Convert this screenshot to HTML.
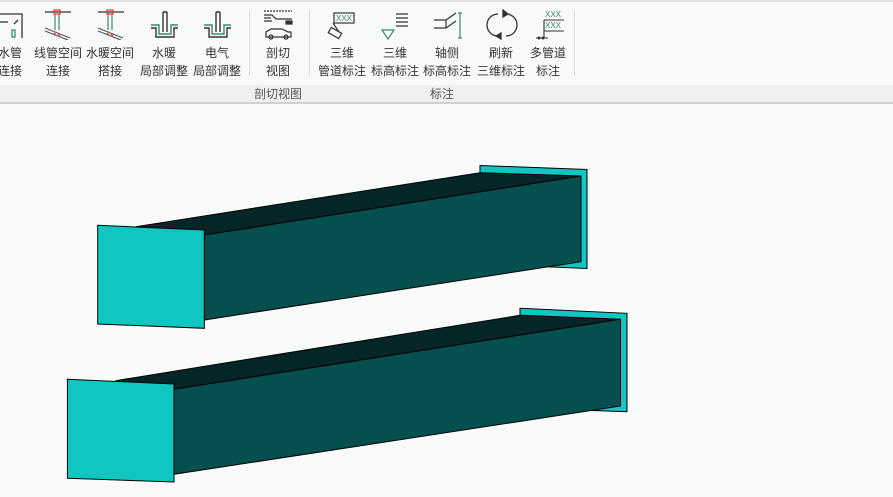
<!DOCTYPE html>
<html><head><meta charset="utf-8"><style>
html,body{margin:0;padding:0;width:893px;height:497px;overflow:hidden;background:#f9fbfb;font-family:"Liberation Sans","Noto Sans CJK SC",sans-serif;}
#tb{position:absolute;left:0;top:0;width:893px;height:85px;background:#f8f9f9;border-top:2px solid #e4e6e6;box-sizing:border-box;}
#gl{position:absolute;left:0;top:85px;width:893px;height:17px;background:#eff1f1;border-bottom:2px solid #cfd1d1;}
.b{position:absolute;top:44px;width:70px;text-align:center;font-size:12px;line-height:18px;color:#333;}
.g{position:absolute;top:86px;font-size:12px;color:#555;line-height:16px;}
.sep{position:absolute;top:10px;width:1px;height:66px;background:#dcdede;}
svg.i{position:absolute;top:8px;}
</style></head><body>
<div id="tb"></div><div id="gl"></div>
<div class="b" style="left:-25px">水管<br>连接</div>
<div class="b" style="left:23px">线管空间<br>连接</div>
<div class="b" style="left:75px">水暖空间<br>搭接</div>
<div class="b" style="left:129px">水暖<br>局部调整</div>
<div class="b" style="left:182px">电气<br>局部调整</div>
<div class="b" style="left:243px">剖切<br>视图</div>
<div class="b" style="left:307px">三维<br>管道标注</div>
<div class="b" style="left:360px">三维<br>标高标注</div>
<div class="b" style="left:412px">轴侧<br>标高标注</div>
<div class="b" style="left:466px">刷新<br>三维标注</div>
<div class="b" style="left:513px">多管道<br>标注</div>
<div class="sep" style="left:249px"></div>
<div class="sep" style="left:309px"></div>
<div class="sep" style="left:574px"></div>
<div class="g" style="left:254px">剖切视图</div>
<div class="g" style="left:430px">标注</div>
<svg class="i" style="left:0" width="30" height="32" fill="none" stroke="#333" stroke-width="1.3"><path d="M0 6H22V30"/><path d="M0 14H8"/><rect x="12" y="22" width="3" height="7" stroke="#3a8a6a"/><path d="M14 16l4-4"/></svg>
<svg class="i" style="left:42px" width="32" height="32" fill="none" stroke-width="1.2"><path d="M3 4H29" stroke="#333"/><rect x="12" y="2" width="6" height="4" stroke="#e33"/><path d="M13 6V22M17 6V22" stroke="#3a8a6a"/><path d="M3 20L28 30M3 23L26 32" stroke="#555"/><path d="M12 25l2 2M16 26l2 2" stroke="#e33"/></svg>
<svg class="i" style="left:95px" width="32" height="32" fill="none" stroke-width="1.2"><path d="M3 4H29" stroke="#333"/><rect x="12" y="2" width="6" height="4" stroke="#e33"/><path d="M13 6V22M17 6V22" stroke="#3a8a6a"/><path d="M3 20L28 30M3 23L26 32" stroke="#555"/><path d="M12 25l2 2M16 26l2 2" stroke="#e33"/></svg>
<svg class="i" style="left:148px" width="32" height="32" fill="none" stroke-width="1.4"><path d="M15 4V24M19 4V24M15 4H19" stroke="#333"/><path d="M3 17H11V26H23V17H30" stroke="#3a8a6a"/><path d="M3 20H8V29H26V20H30" stroke="#333"/></svg>
<svg class="i" style="left:201px" width="32" height="32" fill="none" stroke-width="1.4"><path d="M15 4V24M19 4V24M15 4H19" stroke="#333"/><path d="M3 17H11V26H23V17H30" stroke="#3a8a6a"/><path d="M3 20H8V29H26V20H30" stroke="#333"/></svg>
<svg class="i" style="left:262px" width="32" height="32" fill="none" stroke="#333" stroke-width="1.2"><path d="M2 3H30" stroke-dasharray="2 1"/><path d="M2 7H10L14 11H30M2 10H9M2 13H10"/><rect x="24" y="13" width="6" height="3" fill="#333"/><path d="M4 29V24L9 21H20L26 24H29V29Z"/><circle cx="9" cy="29" r="2"/><circle cx="24" cy="29" r="2"/></svg>
<svg class="i" style="left:327px" width="32" height="32" fill="none" stroke="#333" stroke-width="1.2"><rect x="7" y="5" width="20" height="10"/><text x="9" y="13" font-size="8" fill="#3a8a6a" stroke="none" font-family="Liberation Sans">XXX</text><path d="M6 15L12 24"/><rect x="2" y="22" width="12" height="6" transform="rotate(30 8 25)"/></svg>
<svg class="i" style="left:380px" width="32" height="32" fill="none" stroke-width="1.2"><path d="M16 6H28M16 10H28M16 14H28M16 18H28" stroke="#333"/><path d="M2 22H14L8 31Z" stroke="#3a8a6a"/></svg>
<svg class="i" style="left:432px" width="34" height="34" fill="none" stroke-width="1.2"><path d="M2 12H14L24 5M2 20H14L24 13M14 12V20" stroke="#333"/><path d="M28 5V30M26 5H30M26 30H30" stroke="#3a8a6a"/></svg>
<svg class="i" style="left:486px" width="32" height="32" fill="none" stroke="#333" stroke-width="1.3"><path d="M12 6A11 11 0 0 0 12 28"/><path d="M20 6A11 11 0 0 1 20 28"/><path d="M17 2L22 6L17 9Z M15 25L10 28L15 31Z" fill="#333"/></svg>
<svg class="i" style="left:534px" width="32" height="34" fill="none" stroke-width="1.1"><text x="11" y="9" font-size="8" fill="#3a8a6a" font-family="Liberation Sans">XXX</text><path d="M10 12H30" stroke="#333"/><text x="11" y="20" font-size="8" fill="#3a8a6a" font-family="Liberation Sans">XXX</text><path d="M10 23H30M10 12V30M2 30H14" stroke="#333"/><circle cx="5" cy="30" r="1.5" fill="#333"/><circle cx="9" cy="30" r="1.5" fill="#333"/></svg>
<svg style="position:absolute;left:0;top:0" width="893" height="497" stroke="#000" stroke-width="1">
<polygon points="480,165.5 587,169.5 587,268.5 480,264" fill="#10c6c0"/>
<polygon points="135.8,226.7 480,172.7 581,176 204.3,235" fill="#052628"/>
<polygon points="204.3,235 581,176 581,261.7 204.3,320" fill="#064f4f"/>
<polygon points="97.7,225.3 204.3,230 204.3,328.3 97.7,324" fill="#10c6c0"/>
<polygon points="520,308.3 627,313.3 627,411.7 520,408" fill="#10c6c0"/>
<polygon points="115.5,380.7 520,315.3 620.5,319.3 174,389.3" fill="#052628"/>
<polygon points="174,389.3 620.5,319.3 620.5,406 174,474.3" fill="#064f4f"/>
<polygon points="67.4,379.3 174,384 174,482 67.4,478.3" fill="#10c6c0"/>
</svg>
</body></html>
